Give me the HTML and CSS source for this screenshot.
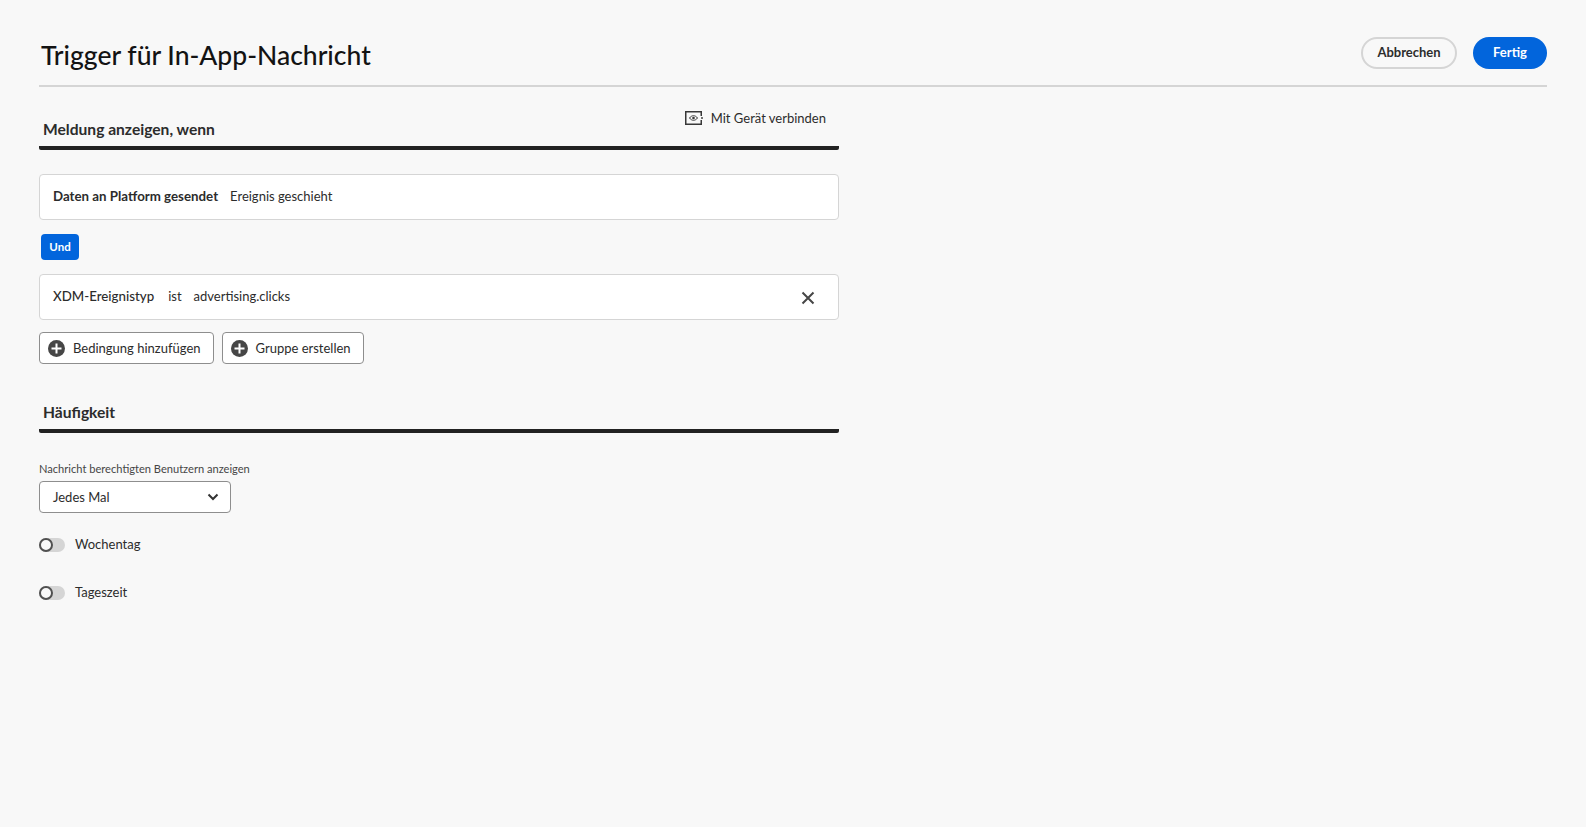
FILE: index.html
```html
<!DOCTYPE html>
<html lang="de">

<head>
    <meta charset="UTF-8">
    <title>Trigger für In-App-Nachricht</title>
    <link rel="stylesheet" href="styles.css">
</head>

<body>
    <div class="page">
        <header class="page-header">
            <h1>Trigger für In-App-Nachricht</h1>
            <div class="actions">
                <button class="pill pill-quiet">Abbrechen</button>
                <button class="pill pill-primary">Fertig</button>
            </div>
        </header>

        <main class="content">
            <section class="section-first">
                <div class="section-head">
                    <h2>Meldung anzeigen, wenn</h2>
                    <a class="connect" href="#">
                        <svg width="18" height="14" viewBox="0 0 18 14">
                            <path d="M0 0h17v5h-1.500V1.500h-14v11h14V9H17v5H0z" fill="#383838"/>
                            <path d="M4.500 7c1-1.500 2.600-2.300 4-2.300s3 .8 4 2.300c-1 1.500-2.600 2.300-4 2.300S5.500 8.500 4.500 7z" fill="none" stroke="#383838"/>
                            <circle cx="8.500" cy="7" r="1.300" fill="#383838"/>
                            <rect x="16" y="6.300" width="2" height="1.400" fill="#383838"/>
                        </svg>
                        Mit Gerät verbinden
                    </a>
                </div>

                <div class="rule-card">
                    <span class="strong">Daten an Platform gesendet</span>
                    <span>Ereignis geschieht</span>
                </div>

                <span class="and-tag">Und</span>

                <div class="rule-card">
                    <span class="medium">XDM-Ereignistyp</span>
                    <span>ist</span>
                    <span class="value">advertising.clicks</span>
                    <svg class="remove" width="14" height="14" viewBox="0 0 14 14">
                        <path d="M1.500 1.500l11 11M12.500 1.500l-11 11" stroke="#464646" stroke-width="2" fill="none"/>
                    </svg>
                </div>

                <div class="add-row">
                    <button class="outline-btn">
                        <svg width="17" height="17" viewBox="0 0 17 17">
                            <circle cx="8.500" cy="8.500" r="8.500" fill="#464646"/>
                            <path d="M8.500 3.500v10M3.500 8.500h10" stroke="#fff" stroke-width="2"/>
                        </svg>
                        Bedingung hinzufügen
                    </button>
                    <button class="outline-btn">
                        <svg width="17" height="17" viewBox="0 0 17 17">
                            <circle cx="8.500" cy="8.500" r="8.500" fill="#464646"/>
                            <path d="M8.500 3.500v10M3.500 8.500h10" stroke="#fff" stroke-width="2"/>
                        </svg>
                        Gruppe erstellen
                    </button>
                </div>
            </section>

            <section class="section-second">
                <div class="section-head section-head-tall">
                    <h2>Häufigkeit</h2>
                </div>

                <label class="field-label">Nachricht berechtigten Benutzern anzeigen</label>
                <div class="select">
                    <span>Jedes Mal</span>
                    <svg width="12" height="8" viewBox="0 0 12 8">
                        <path d="M1.500 1.500L6 6l4.500-4.500" stroke="#333" stroke-width="2" fill="none"/>
                    </svg>
                </div>

                <div class="toggle-row">
                    <span class="toggle"></span>
                    <span>Wochentag</span>
                </div>
                <div class="toggle-row">
                    <span class="toggle"></span>
                    <span>Tageszeit</span>
                </div>
            </section>
        </main>
    </div>
</body>

</html>
```

FILE: styles.css
```css
*,
*::before {
    box-sizing: border-box;
}

html,
body {
    height: 100%;
}

body {
    margin: 0;
    font-family: Lato, "Noto Sans", Arial, sans-serif;
    font-size: 13px;
    color: #2c2c2c;
    background-color: #f8f8f8;
    overflow: hidden;
}

.page {
    padding: 0 39px;
}

.page-header {
    display: flex;
    justify-content: space-between;
    align-items: flex-start;
    height: 87px;
    border-bottom: 2px solid #d5d5d5;
}

.page-header h1 {
    margin: 36px 0 0 2px;
    font-size: 26.500px;
    line-height: 38px;
    font-weight: 500;
    color: #131313;
}

.actions {
    display: flex;
    gap: 16px;
    margin-top: 37px;
}

.pill {
    height: 32px;
    padding: 0 0 2px;
    border-radius: 16px;
    font-family: inherit;
    font-size: 13px;
    font-weight: 700;
}

.pill-quiet {
    width: 96px;
    background-color: transparent;
    border: 2px solid #d5d5d5;
    color: #2c2c2c;
}

.pill-primary {
    width: 74px;
    background-color: #0265dc;
    border: none;
    color: #fff;
}

.content {
    width: 800px;
}

.section-first {
    padding-top: 27px;
}

.section-second {
    padding-top: 32px;
}

.section-head {
    display: flex;
    justify-content: space-between;
    align-items: flex-start;
    height: 36px;
    border-bottom: 4px solid #222;
    border-radius: 2px;
    padding: 0 13px 0 4px;
}

.section-head-tall {
    height: 37px;
}

.section-head h2 {
    margin: 5px 0 0;
    font-size: 15.600px;
    line-height: 20px;
    font-weight: 700;
}

.section-head-tall h2 {
    margin-top: 6px;
}

.connect {
    display: flex;
    align-items: center;
    gap: 8px;
    margin-top: -4px;
    color: #2c2c2c;
    text-decoration: none;
}

.rule-card {
    display: flex;
    align-items: center;
    gap: 12px;
    height: 46px;
    margin-top: 24px;
    padding: 0 23px 3px 13px;
    background-color: #fff;
    border: 1px solid #d5d5d5;
    border-radius: 4px;
    font-size: 13px;
}

.strong {
    font-size: 13.300px;
    font-weight: 700;
}

.medium {
    font-size: 13.300px;
    font-weight: 500;
    margin-right: 2px;
}

.value {
    flex: 1;
}

.remove {
    margin-top: 4px;
}

.and-tag {
    display: block;
    width: 38px;
    height: 26px;
    margin: 14px 0 -10px 2px;
    background-color: #0265dc;
    border-radius: 4px;
    color: #fff;
    font-size: 11.500px;
    font-weight: 700;
    line-height: 26px;
    text-align: center;
}

.add-row {
    display: flex;
    gap: 8px;
    margin-top: 12px;
}

.outline-btn {
    display: flex;
    align-items: center;
    gap: 8px;
    height: 32px;
    padding: 0 12px 0 8px;
    background-color: #fff;
    border: 1px solid #8e8e8e;
    border-radius: 4px;
    font-family: inherit;
    font-size: 13px;
    color: #2c2c2c;
}

.field-label {
    display: block;
    margin-top: 28px;
    font-size: 11.100px;
    line-height: 16px;
    color: #464646;
}

.select {
    display: flex;
    justify-content: space-between;
    align-items: center;
    width: 192px;
    height: 32px;
    margin-top: 4px;
    padding: 0 11px 0 13px;
    background-color: #fff;
    border: 1px solid #8e8e8e;
    border-radius: 4px;
}

.toggle-row {
    display: flex;
    align-items: center;
    gap: 10px;
    height: 20px;
    margin-top: 28px;
}

.select + .toggle-row {
    margin-top: 21px;
}

.toggle {
    position: relative;
    top: 1px;
    width: 26px;
    height: 14px;
    background-color: #d5d5d5;
    border-radius: 7px;
}

.toggle::before {
    content: "";
    position: absolute;
    left: 0;
    top: 0;
    width: 14px;
    height: 14px;
    background-color: #f8f8f8;
    border: 2px solid #505050;
    border-radius: 50%;
}
```
